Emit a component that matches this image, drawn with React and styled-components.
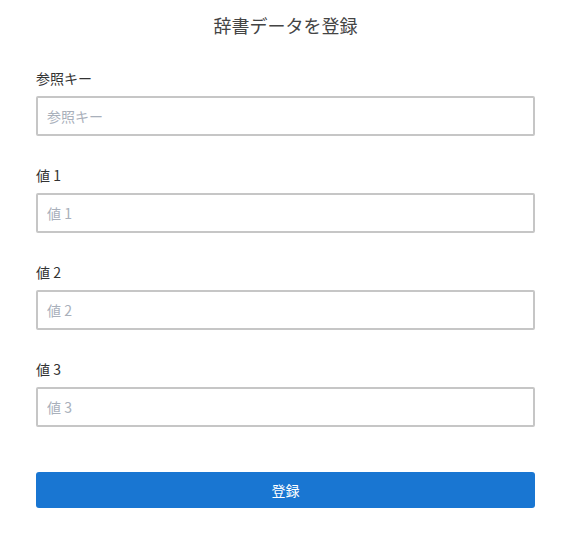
import React from 'react';
import styled, { createGlobalStyle } from 'styled-components';

const GlobalStyle = createGlobalStyle`
  body {
    margin: 0;
    background: #fff;
    font-family: "Noto Sans CJK JP", "Noto Sans", sans-serif;
    color: #333;
  }
`;

const Page = styled.div`
  width: 572px;
  padding: 13px 37px 0 36px;
  box-sizing: border-box;
`;

const Title = styled.h1`
  margin: 0 0 31px;
  font-size: 18px;
  font-weight: 400;
  line-height: 24px;
  text-align: center;
  color: #444;
`;

const Field = styled.div`
  display: flex;
  flex-direction: column;
  gap: 8px;
  margin-bottom: 29px;
`;

const Label = styled.label`
  font-size: 14px;
  line-height: 20px;
  color: #333;
`;

const Input = styled.input`
  height: 40px;
  box-sizing: border-box;
  border: 2px solid #c6c6c6;
  border-radius: 2px;
  padding: 0 9px;
  font-family: inherit;
  font-size: 14px;
  color: #333;
  outline: none;
  &::placeholder {
    color: #a9b0bb;
  }
`;

const Submit = styled.button`
  width: 100%;
  height: 36px;
  margin-top: 16px;
  border: none;
  border-radius: 3px;
  background: #1976d2;
  color: #fff;
  font-family: inherit;
  font-size: 14px;
  cursor: pointer;
`;

const fields = ['参照キー', '値 1', '値 2', '値 3'];

const App = () => {
  return (
    <>
      <GlobalStyle />
      <Page>
        <Title>辞書データを登録</Title>
        {fields.map((name) => (
          <Field key={name}>
            <Label>{name}</Label>
            <Input placeholder={name} />
          </Field>
        ))}
        <Submit>登録</Submit>
      </Page>
    </>
  );
};

export default App;
